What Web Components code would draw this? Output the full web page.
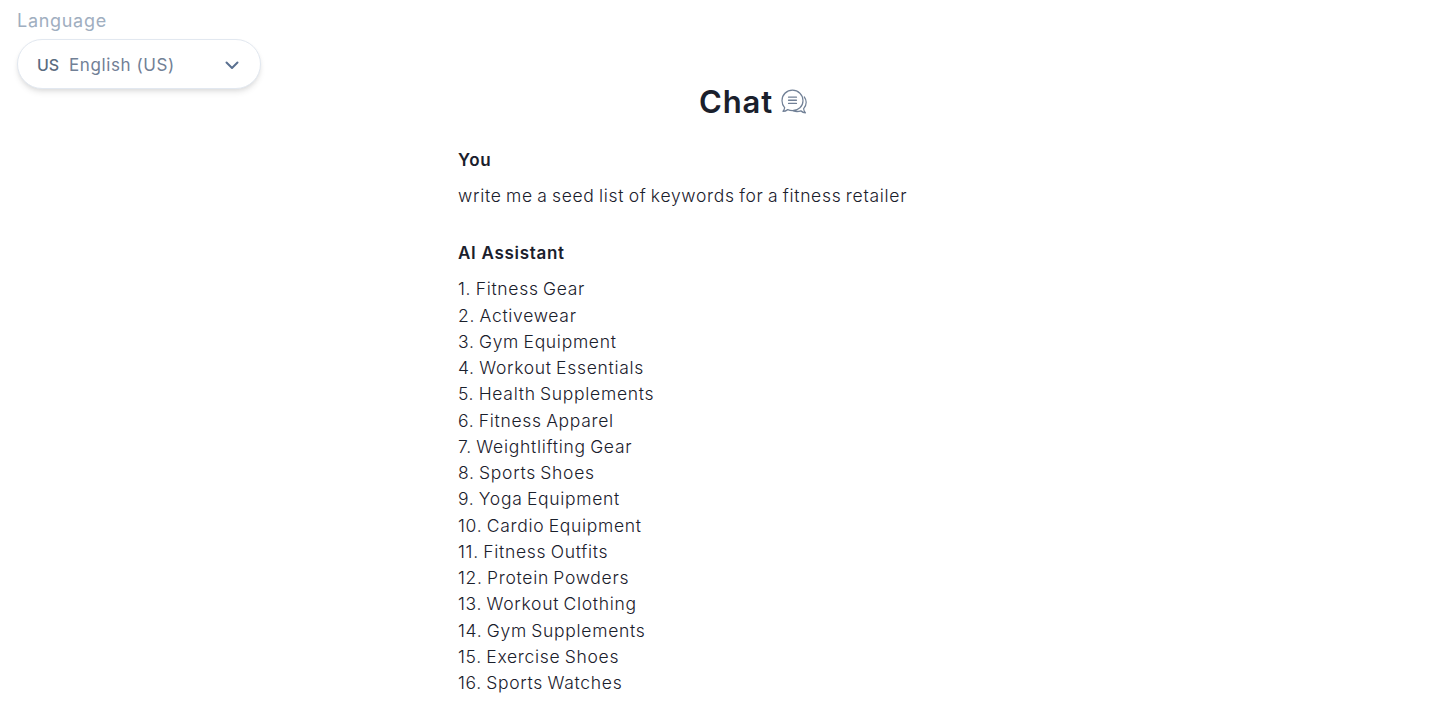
<!DOCTYPE html>
<html>
<head>
<meta charset="utf-8">
<style>
    html, body { margin: 0; padding: 0; background: #fff; }
    body { font-family: Inter, "Noto Sans", sans-serif; height: 702px; overflow: hidden; }
</style>
</head>
<body>
<app-page></app-page>
<script>
const langTemplate = document.createElement("template")
langTemplate.innerHTML = /*html*/`
    <style>
    :host {
        display: block;
        width: 244px;
    }
    label {
        display: block;
        font-size: 18px;
        line-height: 24px;
        color: #a0aec0;
        letter-spacing: 0.7px;
        margin-bottom: 6px;
    }
    #box {
        display: flex;
        align-items: center;
        height: 50px;
        box-sizing: border-box;
        padding: 2px 20px 0 19px;
        background: #fff;
        border: 1px solid #e2e8f0;
        border-radius: 25px;
        box-shadow: 0 4px 6px -1px rgba(0,0,0,.1), 0 2px 4px -1px rgba(0,0,0,.06);
        color: #718096;
        font-size: 17px;
    }
    #flag {
        font-size: 16px;
        font-weight: 500;
        color: #5a6b80;
        width: 32px;
    }
    #name { flex: 1; letter-spacing: 0.6px; }
    svg { display: block; }
    </style>
    <label>Language</label>
    <div id="box">
        <span id="flag">US</span>
        <span id="name">English (US)</span>
        <svg width="16" height="16" viewBox="0 0 16 16" fill="none" stroke="#5a7090" stroke-width="2" stroke-linecap="round" stroke-linejoin="round"><path d="M2.500 5.500 8 11l5.500-5.500"/></svg>
    </div>
`
class langSelect extends HTMLElement
{
    constructor(){
        super()
        const shadow = this.attachShadow({mode: "open"})
        shadow.append(langTemplate.content.cloneNode(true))
    }
}
customElements.define("lang-select", langSelect)

const titleTemplate = document.createElement("template")
titleTemplate.innerHTML = /*html*/`
    <style>
    :host {
        display: flex;
        justify-content: center;
        align-items: center;
        gap: 8px;
    }
    h1 {
        margin: 0;
        font-size: 31px;
        line-height: 36px;
        font-weight: 600;
        letter-spacing: 0.9px;
        color: #1a202c;
    }
    svg { display: block; margin-top: -1px; }
    </style>
    <h1><slot></slot></h1>
    <svg width="26" height="25" viewBox="0 0 26 21.500" preserveAspectRatio="none" fill="none" stroke="#718096" stroke-width="1.200" stroke-linecap="round" stroke-linejoin="round">
        <path d="M11.500 1C5.700 1 1 4.800 1 10c0 2.400 1 4.500 2.700 6.100-.2 1.200-.8 2.300-1.700 3.100 1.800 0 3.400-.6 4.700-1.500 1.500.6 3.100.9 4.800.9 5.800 0 10.500-3.800 10.500-8.600S17.300 1 11.500 1z"/>
        <path d="M7.500 7h8M7.500 9.700h8M7.500 12.400h8"/>
        <path d="M23.300 6.800C24.500 8.100 25.200 9.800 25.200 11.500c0 2.200-1 4.100-2.600 5.500.2 1.300.8 2.500 1.800 3.400-1.800 0-3.300-.6-4.500-1.600-1.200.4-2.500.6-3.800.6-1.300 0-2.500-.2-3.600-.6"/>
    </svg>
`
class chatTitle extends HTMLElement
{
    constructor(){
        super()
        const shadow = this.attachShadow({mode: "open"})
        shadow.append(titleTemplate.content.cloneNode(true))
    }
}
customElements.define("chat-title", chatTitle)

const msgTemplate = document.createElement("template")
msgTemplate.innerHTML = /*html*/`
    <style>
    :host {
        display: block;
        margin-bottom: 31px;
    }
    h2 {
        margin: 0 0 10px;
        font-size: 17px;
        line-height: 26px;
        font-weight: 600;
        letter-spacing: 0.7px;
        color: #1a202c;
    }
    #text {
        font-size: 17.5px;
        line-height: 26.25px;
        font-weight: 300;
        letter-spacing: 0.7px;
        word-spacing: -1.2px;
        color: #1a202c;
        white-space: pre-line;
    }
    </style>
    <h2 id="who"></h2>
    <div id="text"><slot></slot></div>
`
class chatMessage extends HTMLElement
{
    constructor(){
        super()
        const shadow = this.attachShadow({mode: "open"})
        shadow.append(msgTemplate.content.cloneNode(true))
        shadow.getElementById("who").textContent = this.getAttribute("who")
    }
}
customElements.define("chat-message", chatMessage)

const appTemplate = document.createElement("template")
appTemplate.innerHTML = /*html*/`
    <style>
    :host {
        display: block;
        height: 702px;
        overflow: hidden;
    }
    #top { padding: 9px 0 0 17px; height: 0; }
    #col {
        width: 590px;
        margin-left: 458px;
        padding-top: 75px;
    }
    #titleWrap {
        margin-bottom: 27px;
        margin-left: -18px;
        width: 626px;
    }
    </style>
    <div id="top"><lang-select></lang-select></div>
    <div id="col">
        <div id="titleWrap"><chat-title>Chat</chat-title></div>
        <chat-message who="You">write me a seed list of keywords for a fitness retailer</chat-message>
        <chat-message who="AI Assistant">1. Fitness Gear
2. Activewear
3. Gym Equipment
4. Workout Essentials
5. Health Supplements
6. Fitness Apparel
7. Weightlifting Gear
8. Sports Shoes
9. Yoga Equipment
10. Cardio Equipment
11. Fitness Outfits
12. Protein Powders
13. Workout Clothing
14. Gym Supplements
15. Exercise Shoes
16. Sports Watches</chat-message>
    </div>
`
class appPage extends HTMLElement
{
    constructor(){
        super()
        const shadow = this.attachShadow({mode: "open"})
        shadow.append(appTemplate.content.cloneNode(true))
    }
}
customElements.define("app-page", appPage)
</script>
</body>
</html>
